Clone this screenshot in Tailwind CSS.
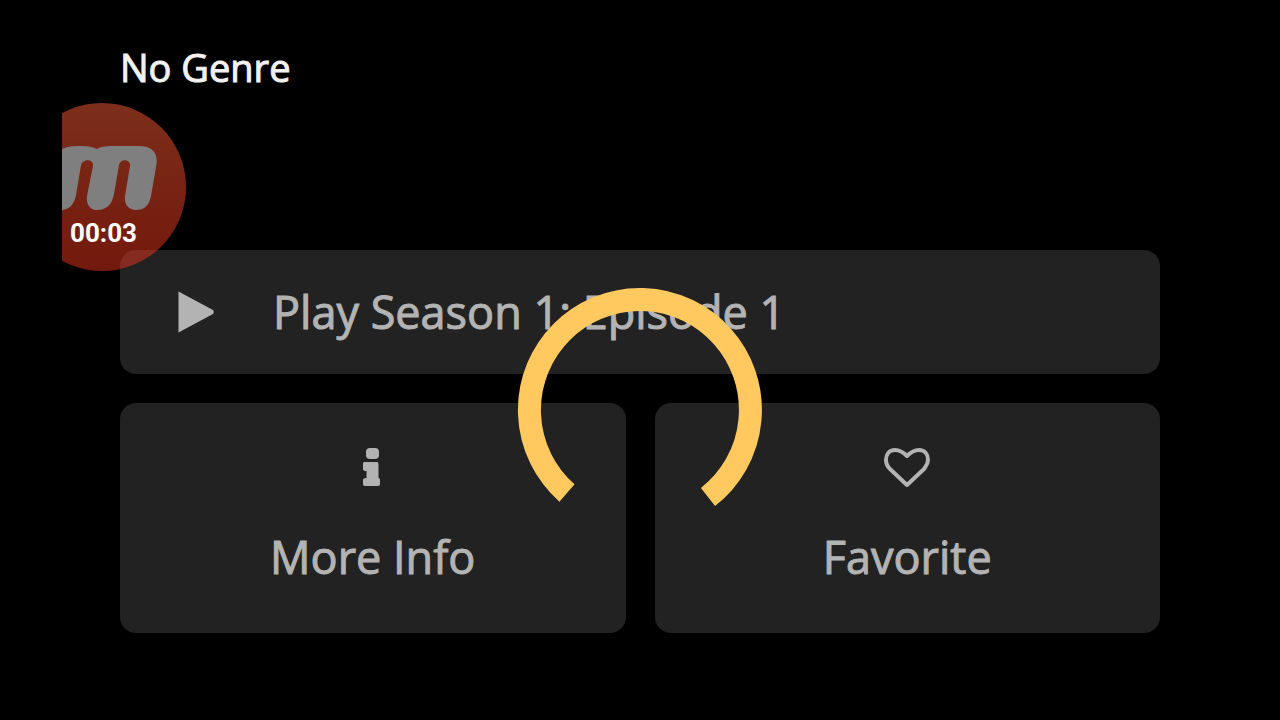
<!DOCTYPE html>
<html lang="en">
  <head>
    <meta charset="UTF-8" />
    <meta name="viewport" content="width=device-width, initial-scale=1.0" />
    <title>No Genre</title>
    <script src="https://cdn.jsdelivr.net/npm/@tailwindcss/browser@4"></script>
  </head>

  <body class="relative min-h-screen bg-black font-['Open_Sans',sans-serif] text-[#b3b3b3] [-webkit-text-stroke:1px_currentColor]">

    <!-- Main Content -->
    <main class="px-30 pt-[39px]">
      <h1 class="text-[38px] leading-14 text-[#f2f2f2]">No Genre</h1>

      <!-- Actions -->
      <div class="mt-[155px] grid grid-cols-2 gap-[29px] text-[45px] leading-16">
        <button type="button" class="col-span-2 flex h-[124px] items-center gap-[59px] rounded-2xl bg-[#222222] pl-[58px] text-left">
          <svg class="h-[42px] w-9 shrink-0" viewBox="0 0 36 42" fill="currentColor" aria-hidden="true">
            <path d="M0.500 0.500 L35 19 Q36.500 21 35 23 L0.500 41.500 Z" />
          </svg>
          <span>Play Season 1: Episode 1</span>
        </button>

        <button type="button" class="flex h-[230px] flex-col items-center gap-[38px] rounded-2xl bg-[#222222] pt-11">
          <svg class="h-10 w-6" viewBox="0 0 24 40" fill="currentColor" aria-hidden="true">
            <rect x="5" y="1" width="13" height="11" rx="4" />
            <path d="M3 15 H16 Q17.500 15 17.500 17 V31 Q19 31 19 33 V37 Q19 39 17 39 H4 Q2 39 2 37 V33 Q2 31 5.500 31 V24 Q2 24 2 22 V17 Q2 15 3 15 Z" />
          </svg>
          <span>More Info</span>
        </button>

        <button type="button" class="flex h-[230px] flex-col items-center gap-[38px] rounded-2xl bg-[#222222] pt-11">
          <svg class="h-10 w-12" viewBox="0 0 48 40" fill="none" stroke="currentColor" stroke-width="4" stroke-linejoin="round" aria-hidden="true">
            <path d="M24 9 C20 5 16 3 12 3 C6 3 3 7.500 3 13 C3 17 4 19 7 22 L24 38 L41 22 C43 19 45 17 45 13 C45 7.500 42 3 36 3 C32 3 28 5 24 9 Z" />
          </svg>
          <span>Favorite</span>
        </button>
      </div>
    </main>

    <!-- Loading spinner -->
    <div class="pointer-events-none absolute inset-x-0 top-[287px] flex justify-center" role="status" aria-label="Loading">
      <svg class="size-[246px]" viewBox="0 0 246 246" fill="none" stroke="#ffc960" stroke-width="23">
        <path d="M50 206 A110.500 110.500 0 1 1 191 210" />
      </svg>
    </div>

    <!-- Recorder bubble -->
    <div class="absolute top-[103px] left-[62px] h-[168px] w-[124px]">
      <svg class="size-full" viewBox="44 0 124 168" aria-hidden="true">
        <defs>
          <linearGradient id="bubble" x1="0" y1="0" x2="0" y2="1">
            <stop offset="0" stop-color="#f45c34" />
            <stop offset="1" stop-color="#e2301a" />
          </linearGradient>
        </defs>
        <g opacity="0.51">
          <circle cx="84" cy="84" r="84" fill="url(#bubble)" />
          <path fill="#fafafa" d="M40 48 C48 43 56 43 63 43 C70 43 75 44 79 46 C84 43 90 43 99 43 C108 43 115 43 121 43 C134 43 140 50 138.500 61 L133 93 C131 103 126 107 118 107 C110 107 106 101 107 93 L112 63 C113 56 102 55 101 62 L96 91 C94 102 88 107 79 107 C72 107 68 101 69 93 L75 63 C76 56 65 55 63 62 L58 92 C56 102 51 107 43 107 L38 107 Z" />
        </g>
      </svg>
      <span class="absolute bottom-6 left-2 font-['Roboto',sans-serif] text-[26px] leading-7 font-bold text-white [-webkit-text-stroke:0]">00:03</span>
    </div>
  </body>
</html>
